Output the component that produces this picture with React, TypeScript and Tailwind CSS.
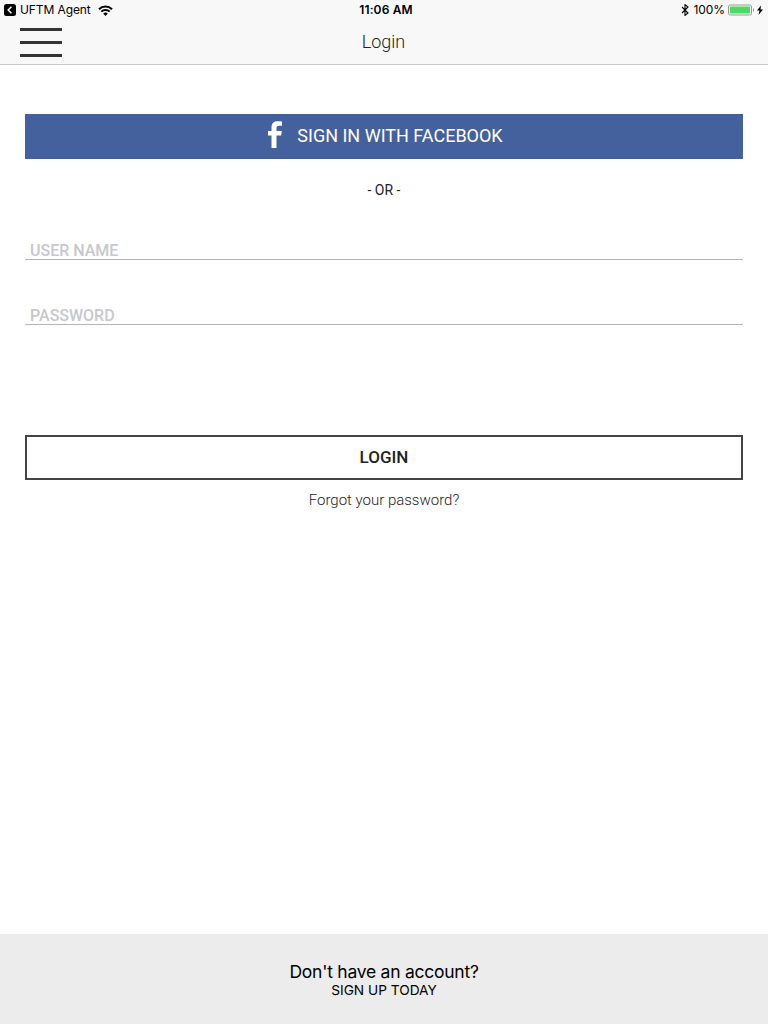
export default function App() {
  return (
    <div className="flex h-[1024px] w-[768px] flex-col bg-white font-[Roboto,sans-serif] text-[#222]">
      <header className="h-[65px] border-b border-[#cacaca] bg-[#f8f8f8]">
        <div className="grid h-[20px] grid-cols-3 items-center px-1 font-[Inter,sans-serif] text-[12px] text-black">
          <div className="flex items-center">
            <svg width="12" height="12" viewBox="0 0 12 12"><rect width="12" height="12" rx="2.5" /><path d="M7.4 2.8 4.2 6l3.2 3.2" fill="none" stroke="#fff" strokeWidth="1.5" /></svg>
            <span className="ml-1 w-[70px] whitespace-nowrap tracking-[-0.1px]">UFTM Agent</span>
            <svg className="ml-2" width="15" height="11" viewBox="0 0 15 11" fill="none" stroke="#000" strokeWidth="2"><path d="M1 4.200a9.200 9.200 0 0 1 13 0M3.300 6.600a6 6 0 0 1 8.400 0" /><path d="M7.500 11 5.200 8.600a3.300 3.300 0 0 1 4.600 0z" fill="#000" stroke="none" /></svg>
          </div>
          <div className="pl-1 text-center font-semibold tracking-[0.15px]">11:06 AM</div>
          <div className="flex items-center justify-end">
            <svg width="8" height="12" viewBox="0 0 8 12" fill="none" stroke="#000" strokeWidth="1.1"><path d="m1 3 6 6-3 2.400V.6L7 3 1 9" /></svg>
            <span className="ml-[5px] tracking-[-0.1px]">100%</span>
            <svg className="ml-[3px]" width="36" height="12" viewBox="0 0 36 12"><rect x=".5" y="1" width="23" height="10" rx="2" fill="none" stroke="#999" /><rect x="2" y="2.500" width="20" height="7" rx=".7" fill="#4cd964" /><path d="M25 4v4l1-1V5z" fill="#999" /><path d="m33 1.500-4 5h2.500L30.500 11l4.500-5.500h-2.500z" /></svg>
          </div>
        </div>
        <div className="mt-px grid h-[42px] grid-cols-3 items-center px-5">
          <div className="flex flex-col gap-[10px]"><i className="h-[3px] w-[42px] bg-[#333]" /><i className="h-[3px] w-[42px] bg-[#333]" /><i className="h-[3px] w-[42px] bg-[#333]" /></div>
          <h1 className="pb-[2px] pr-px text-center text-[18px] font-light">Login</h1>
        </div>
      </header>
      <main className="flex flex-1 flex-col px-[25px] pt-[49px]">
        <button className="flex h-[45px] items-center justify-center bg-[#45619d] pb-px pl-[2px] text-[18px] text-white">
          <svg className="mr-[15px] mb-[3px]" width="15" height="27" viewBox="0 0 15 27" fill="#fff"><path d="M4.500 27V14.500H1V10h3.500V6.500C4.500 2.200 7 .3 10.700.3c1.700 0 3 .1 4.300.3v4.200h-2.800c-2 0-2.700.8-2.700 2.500V10h5.300l-.7 4.500H9.500V27z" /></svg>
          <span className="pb-px">SIGN IN WITH FACEBOOK</span>
        </button>
        <p className="mt-[21px] text-center text-[14px] leading-5">- OR -</p>
        <input aria-label="User name" placeholder="USER NAME" className="mt-[40px] h-5 border-b border-[#b5b5b9] px-[5px] pt-[2px] text-[16px] font-medium leading-[18px] placeholder:text-[#c7c7cd]" />
        <input aria-label="Password" type="password" placeholder="PASSWORD" className="mt-[45px] h-5 border-b border-[#b5b5b9] px-[5px] pt-[2px] text-[16px] font-medium leading-[18px] placeholder:text-[#c7c7cd]" />
        <button className="mt-[110px] h-[45px] border-2 border-[#444] text-[17px] font-medium">LOGIN</button>
        <a className="mt-[10px] text-center text-[15px] font-light leading-5">Forgot your password?</a>
      </main>
      <footer className="h-[90px] bg-[#ececec] pt-[27px] text-center font-[Inter,sans-serif] text-black">
        <p className="text-[17.5px] leading-[21px] tracking-[-0.25px]">Don't have an account?</p>
        <p className="text-[13.7px] leading-[16px]">SIGN UP TODAY</p>
      </footer>
    </div>
  );
}
